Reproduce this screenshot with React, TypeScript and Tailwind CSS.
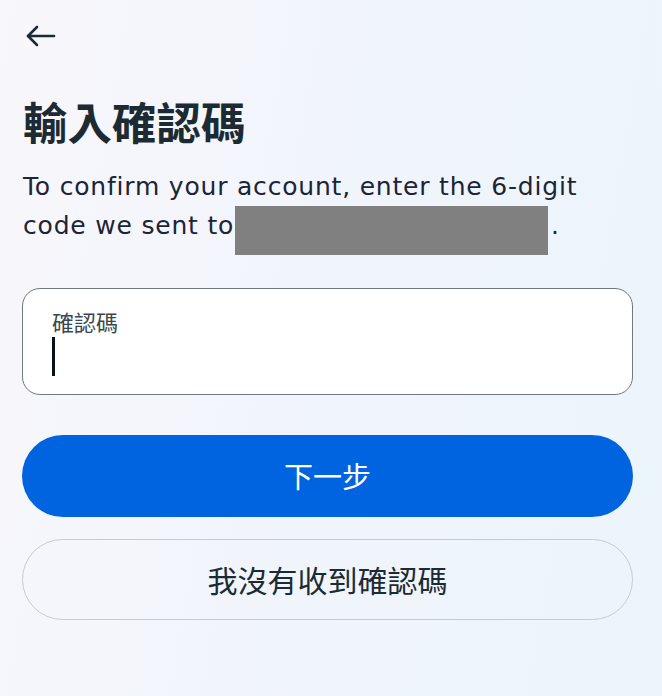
import React from "react";

export default function App() {
  return (
    <div
      className="w-[662px] h-[696px] overflow-hidden bg-[linear-gradient(100deg,#f8f7fb_0%,#f1f5fb_45%,#ecf4fc_100%)] text-[#1c2b33]"
      style={{ fontFamily: '"DejaVu Sans", "Noto Sans CJK TC", sans-serif' }}
    >
      <div className="pl-[22px] pr-[29px] pt-[24px] flex flex-col">
        <div className="h-[24px] flex items-center pl-[3px]">
          <svg width="31" height="22" viewBox="0 0 31 22" fill="none" stroke="#1c2b33" strokeWidth="2.6" strokeLinecap="round" strokeLinejoin="round">
            <path d="M29 11H3" />
            <path d="M12 2L3 11l9 9" />
          </svg>
        </div>
        <h1
          className="mt-[47px] text-[44.5px] leading-[52px] font-bold pl-[1px]"
          style={{ fontFamily: '"Noto Sans CJK TC", sans-serif' }}
        >
          輸入確認碼
        </h1>
        <p className="mt-[21px] text-[25px] leading-[38px] tracking-[0.8px] pl-[1px] text-[#1c2436]">
          To confirm your account, enter the 6-digit
          <br />
          code we sent to
          <span className="inline-block align-[-21px] w-[313px] h-[49px] bg-[#808080] ml-[1px] mr-[3px]" />.
        </p>
        <div className="mt-[33px] h-[107px] rounded-[18px] border border-[#6f7780] bg-white px-[29px] pt-[18px] flex flex-col">
          <span
            className="text-[22px] leading-[28px] text-[#3a4650]"
            style={{ fontFamily: '"Noto Sans CJK TC", sans-serif' }}
          >
            確認碼
          </span>
          <span className="mt-[2px] w-[2.5px] h-[39px] bg-[#0a1317]" />
        </div>
        <button
          className="mt-[40px] h-[82px] rounded-full bg-[#0064e0] text-white text-[29px] flex items-center justify-center"
          style={{ fontFamily: '"Noto Sans CJK TC", sans-serif' }}
        >
          下一步
        </button>
        <button
          className="mt-[22px] h-[81px] rounded-full border border-[#c6cbd0] text-[#1c2b33] text-[30px] flex items-center justify-center"
          style={{ fontFamily: '"Noto Sans CJK TC", sans-serif' }}
        >
          我沒有收到確認碼
        </button>
      </div>
    </div>
  );
}
